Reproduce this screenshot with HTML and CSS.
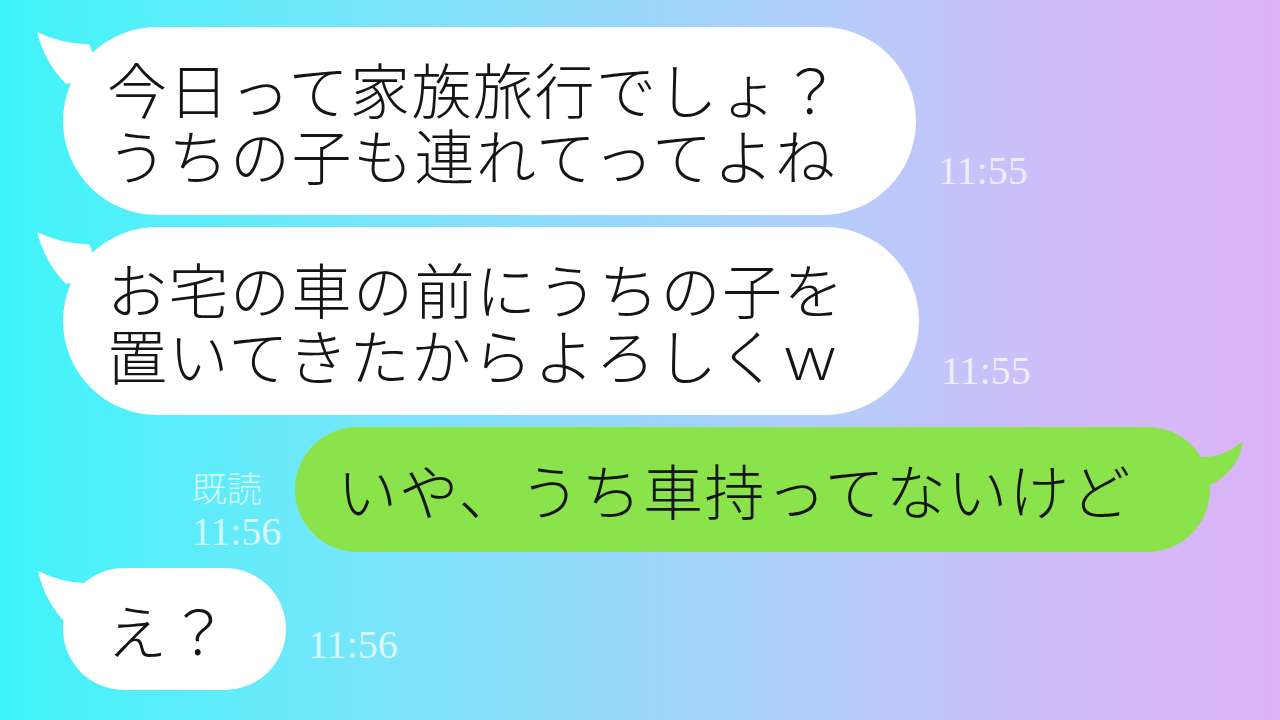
FILE: index.html
```html
<!DOCTYPE html>
<html lang="ja">
<head>
  <meta charset="UTF-8">
  <meta name="viewport" content="width=device-width, initial-scale=1.0">
  <title>トーク</title>
  <link rel="stylesheet" href="styles.css">
</head>
<body>
  <div class="chat">

    <div class="row">
      <div class="bubble bubble-in">
        <svg class="tail tail-in" viewBox="-30 0 70 70" width="70" height="70">
          <path d="M26,17 Q2,18 -26,5 Q-18,36 3,57 L40,50 Z" fill="#fff"/>
        </svg>
        <p>今日って家族旅行でしょ？<br>うちの子も連れてってよね</p>
      </div>
      <span class="time">11:55</span>
    </div>

    <div class="row">
      <div class="bubble bubble-in">
        <svg class="tail tail-in" viewBox="-30 0 70 70" width="70" height="70">
          <path d="M26,17 Q2,18 -26,5 Q-18,36 3,57 L40,50 Z" fill="#fff"/>
        </svg>
        <p>お宅の車の前にうちの子を<br>置いてきたからよろしくｗ</p>
      </div>
      <span class="time">11:55</span>
    </div>

    <div class="row row-out">
      <div class="read">
        <span class="read-label">既読</span>
        <span class="read-time">11:56</span>
      </div>
      <div class="bubble bubble-out">
        <svg class="tail tail-out" viewBox="-40 0 80 70" width="80" height="70">
          <path d="M-13,30 Q12,32 33,14 Q28,46 -2,59 L-40,50 Z" fill="#8ae34a"/>
        </svg>
        <p>いや、うち車持ってないけど</p>
      </div>
    </div>

    <div class="row row-last">
      <div class="bubble bubble-in pad-short">
        <svg class="tail tail-in" viewBox="-30 0 70 70" width="70" height="70">
          <path d="M26,15 Q2,16 -25,3 Q-18,34 3,55 L40,50 Z" fill="#fff"/>
        </svg>
        <p>え？</p>
      </div>
      <span class="time time-last">11:56</span>
    </div>

  </div>
</body>
</html>
```

FILE: styles.css
```css
* {
  padding: 0;
  margin: 0;
  box-sizing: border-box;
}

body {
  width: 1280px;
  height: 720px;
  overflow: hidden;
  font-family: "Noto Sans CJK JP", "Noto Sans", sans-serif;
  background: linear-gradient(90deg, #3ef4f8 0%, #76e6fb 28%, #b0d0fb 62%, #cfbdf9 82%, #ddb2f7 100%);
}

.chat {
  display: flex;
  flex-direction: column;
  gap: 12px;
  padding: 27px 0 0 63px;
}

.row {
  display: flex;
  align-items: flex-end;
}

.bubble {
  position: relative;
  padding: 28px 74px 28px 44px;
  border-radius: 95px;
}

.bubble p {
  position: relative;
  font-size: 60px;
  line-height: 66px;
  letter-spacing: 1.5px;
  font-weight: 300;
  color: #151515;
  white-space: nowrap;
}

.bubble-in {
  background-color: #fff;
}

.bubble-out {
  background-color: #8ae34a;
  padding: 29px 78px 30px 42px;
}

.pad-short {
  padding-right: 56px;
}

/* little speech tails */
.tail {
  position: absolute;
  top: 0;
  overflow: visible;
}

.tail-in {
  left: -30px;
}

.tail-out {
  right: -40px;
}

.time {
  font-family: "Liberation Serif", serif;
  font-size: 40px;
  line-height: 1;
  color: rgba(255, 255, 255, 0.72);
  margin: 0 0 24px 22px;
}

.time-last {
  margin-bottom: 25px;
}

.row-out {
  justify-content: flex-end;
  padding-right: 70px;
  align-items: flex-start;
}

.read {
  display: flex;
  flex-direction: column;
  margin: 41px 14px 0 0;
  color: rgba(255, 255, 255, 0.72);
}

.read-label {
  font-size: 35px;
  line-height: 38px;
  font-weight: 300;
}

.read-time {
  font-family: "Liberation Serif", serif;
  font-size: 40px;
  line-height: 40px;
  margin-top: 6px;
}

.row-last {
  margin-top: 4px;
}
```
